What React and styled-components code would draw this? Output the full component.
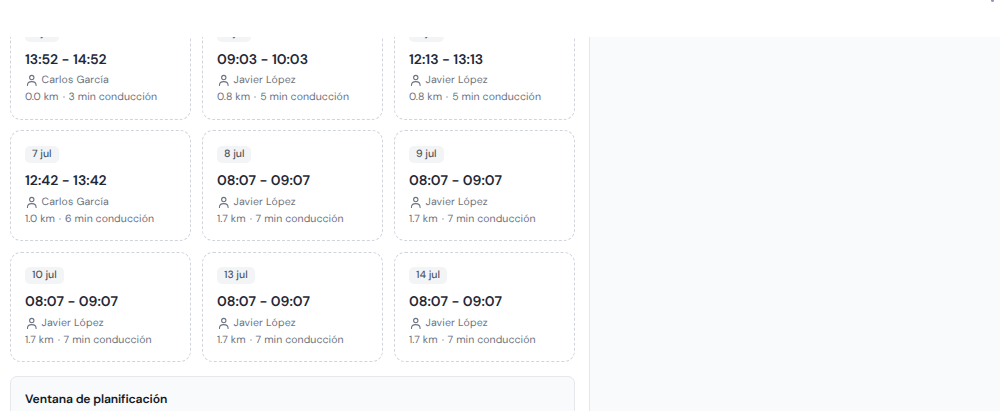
import React from 'react';
import styled, { createGlobalStyle } from 'styled-components';

const GlobalStyle = createGlobalStyle`
  * {
    box-sizing: border-box;
  }

  body {
    margin: 0;
    background: #fff;
    font-family: 'DM Sans', Inter, 'Liberation Sans', sans-serif;
    text-rendering: geometricPrecision;
  }
`;

const Page = styled.div`
  display: flex;
  flex-direction: column;
  height: 411px;
  overflow: hidden;
`;

const TopBar = styled.header`
  flex: 0 0 37px;
  display: flex;
  justify-content: flex-end;
  padding-right: 6px;
`;

const Caret = styled.span`
  width: 3px;
  height: 2px;
  background: #8e9bb0;
  border-radius: 0 0 2px 2px;
`;

const Body = styled.main`
  flex: 1;
  min-height: 0;
  display: flex;
`;

const Panel = styled.section`
  width: 589px;
  padding: 0 14px 0 10px;
  overflow: hidden;
`;

const Aside = styled.aside`
  flex: 1;
  background: #f9fafc;
  border-left: 1px solid #e5e7eb;
`;

const SlotGrid = styled.div`
  display: grid;
  grid-template-columns: repeat(3, 181px);
  grid-auto-rows: 110.6px;
  column-gap: 11px;
  row-gap: 10.8px;
  margin-top: -28px;
`;

const Slot = styled.article`
  display: flex;
  flex-direction: column;
  align-items: flex-start;
  padding: 14.6px 14px;
  border: 1px dashed #d1d5db;
  border-radius: 11px;
  white-space: nowrap;
`;

const DateBadge = styled.span`
  height: 17px;
  padding: 0 7px;
  border-radius: 5px;
  background: #f3f4f6;
  color: #4b5563;
  font-size: 10.5px;
  font-weight: 500;
  line-height: 17.6px;
`;

const Time = styled.div`
  margin-top: 8.1px;
  color: #1f2937;
  font-size: 14px;
  font-weight: 600;
  line-height: 20px;
`;

const Worker = styled.div`
  display: flex;
  align-items: center;
  gap: 3.5px;
  height: 16px;
  margin-top: 4.5px;
  color: #6b7280;
  font-size: 10.5px;
  letter-spacing: 0.16px;
`;

const Travel = styled.div`
  display: flex;
  align-items: center;
  gap: 4px;
  margin-top: 3.2px;
  color: #6b7280;
  font-size: 10.5px;
  line-height: 16px;
  letter-spacing: 0.08px;
`;

const Dot = styled.span`
  width: 2px;
  height: 2px;
  margin-bottom: 2px;
  border-radius: 50%;
  background: #c3c8d0;
`;

const PlanningWindow = styled.section`
  height: 80px;
  margin-top: 13.2px;
  padding: 14px;
  border: 1px solid #e5e7eb;
  border-radius: 7px;
  background: #f9fafb;
`;

const PlanningTitle = styled.h3`
  margin: 0;
  color: #111827;
  font-size: 12.2px;
  font-weight: 600;
  line-height: 16px;
  letter-spacing: -0.14px;
`;

const slots = [
  { date: '2 jul', time: '13:52 - 14:52', worker: 'Carlos García', km: '0.0', min: 3 },
  { date: '3 jul', time: '09:03 - 10:03', worker: 'Javier López', km: '0.8', min: 5 },
  { date: '6 jul', time: '12:13 - 13:13', worker: 'Javier López', km: '0.8', min: 5 },
  { date: '7 jul', time: '12:42 - 13:42', worker: 'Carlos García', km: '1.0', min: 6 },
  { date: '8 jul', time: '08:07 - 09:07', worker: 'Javier López', km: '1.7', min: 7 },
  { date: '9 jul', time: '08:07 - 09:07', worker: 'Javier López', km: '1.7', min: 7 },
  { date: '10 jul', time: '08:07 - 09:07', worker: 'Javier López', km: '1.7', min: 7 },
  { date: '13 jul', time: '08:07 - 09:07', worker: 'Javier López', km: '1.7', min: 7 },
  { date: '14 jul', time: '08:07 - 09:07', worker: 'Javier López', km: '1.7', min: 7 },
];

function UserIcon() {
  return (
    <svg width="13" height="13" viewBox="0 0 24 24" fill="none" stroke="currentColor" strokeWidth="2" strokeLinecap="round">
      <circle cx="12.5" cy="6.5" r="4" />
      <path d="M4.5 21c0-4.6 3-7 8-7s8 2.400 8 7" />
    </svg>
  );
}

function SlotCard({ slot }) {
  return (
    <Slot>
      <DateBadge>{slot.date}</DateBadge>
      <Time>{slot.time}</Time>
      <Worker>
        <UserIcon />
        <span>{slot.worker}</span>
      </Worker>
      <Travel>
        <span>{slot.km} km</span>
        <Dot />
        <span>{slot.min} min conducción</span>
      </Travel>
    </Slot>
  );
}

function App() {
  return (
    <Page>
      <GlobalStyle />
      <TopBar>
        <Caret />
      </TopBar>
      <Body>
        <Panel>
          <SlotGrid>
            {slots.map(slot => (
              <SlotCard key={slot.date} slot={slot} />
            ))}
          </SlotGrid>
          <PlanningWindow>
            <PlanningTitle>Ventana de planificación</PlanningTitle>
          </PlanningWindow>
        </Panel>
        <Aside />
      </Body>
    </Page>
  );
}

export default App;
